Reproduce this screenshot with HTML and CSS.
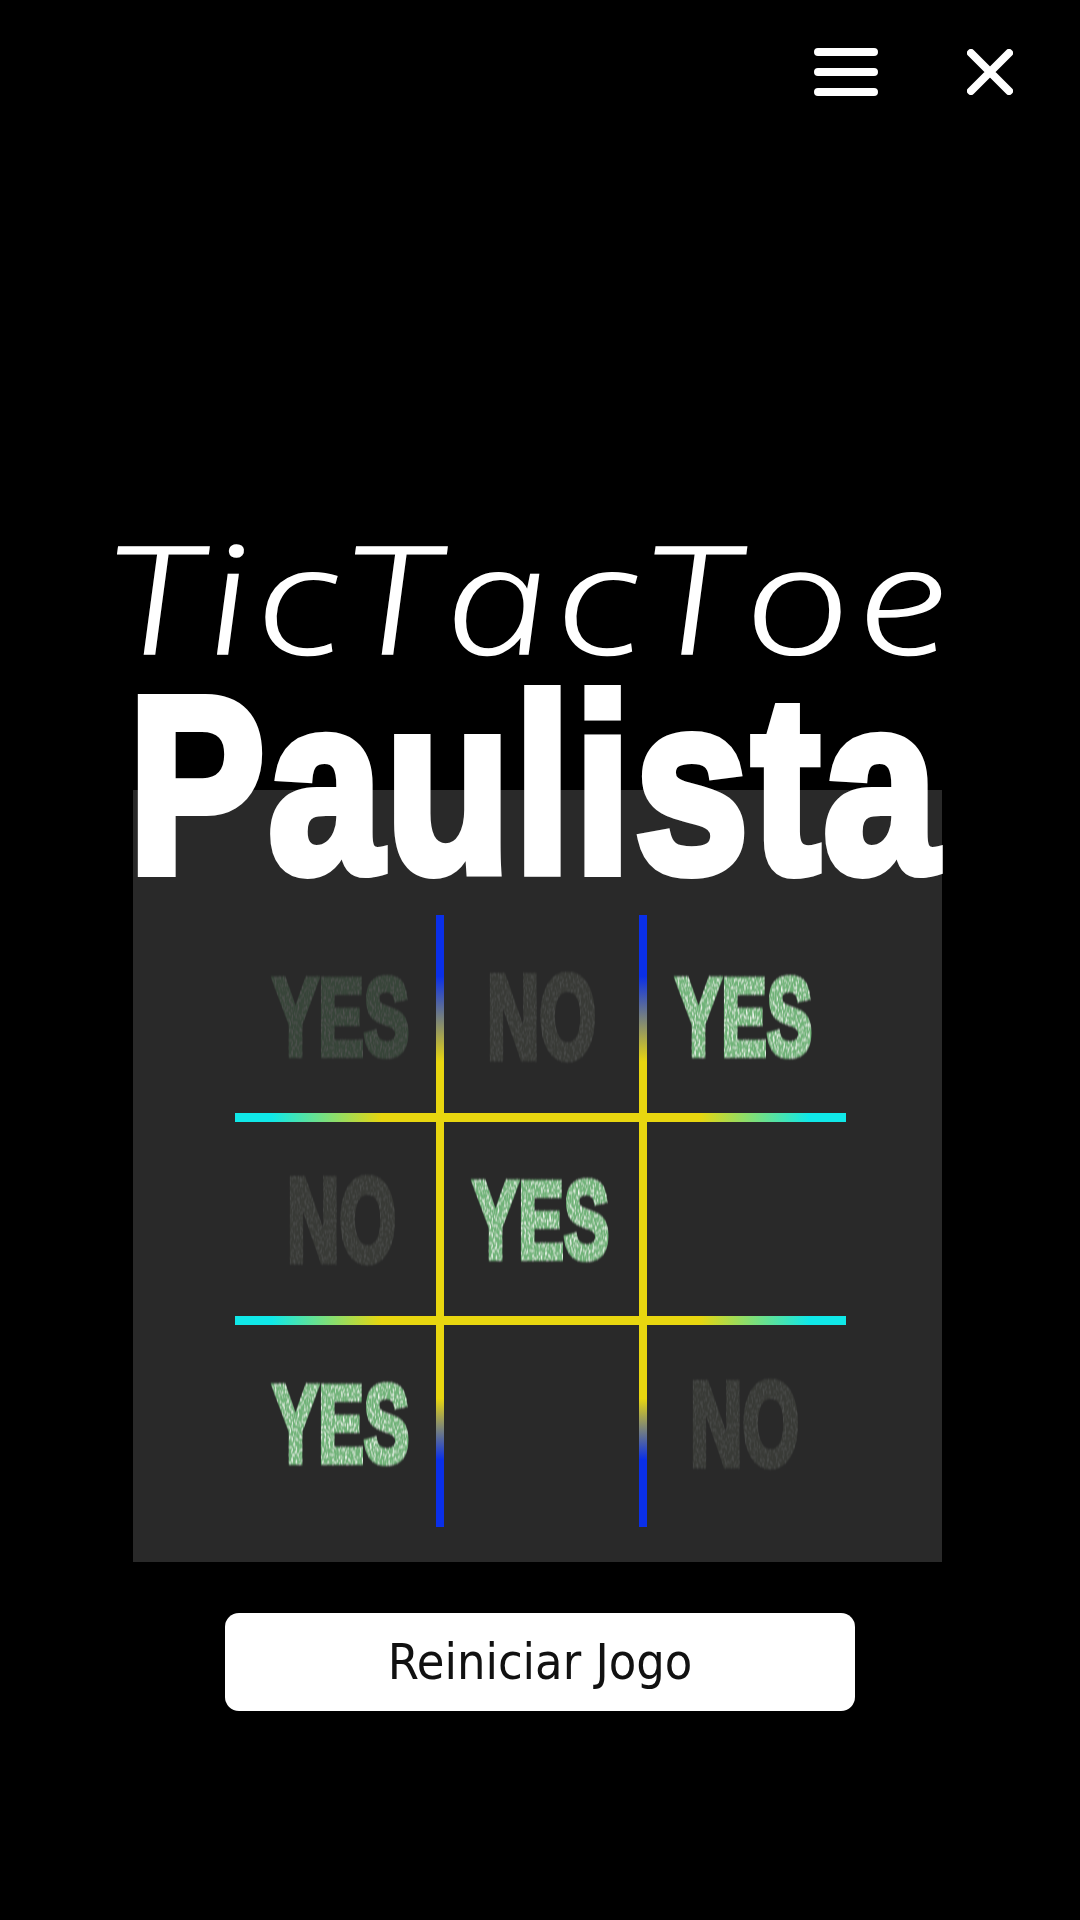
FILE: index.html
```html
<!DOCTYPE html>
<html lang="pt-BR">
<head>
    <meta charset="UTF-8">
    <meta name="viewport" content="width=device-width, initial-scale=1.0">
    <title>TicTacToe Paulista</title>
    <link rel="stylesheet" href="styles.css">
</head>
<body>
<svg class="defs" width="0" height="0" aria-hidden="true">
    <filter id="speckle" x="-5%" y="-5%" width="110%" height="110%">
        <feTurbulence type="fractalNoise" baseFrequency="0.3 0.4" numOctaves="2" seed="7" result="noise"/>
        <feColorMatrix in="noise" type="matrix" values="0 0 0 0 0.86  0 0 0 0 0.94  0 0 0 0 0.86  0 0 0 5 -2.6" result="flecks"/>
        <feComposite in="flecks" in2="SourceAlpha" operator="in" result="clipped"/>
        <feMerge result="merged">
            <feMergeNode in="SourceGraphic"/>
            <feMergeNode in="clipped"/>
        </feMerge>
        <feGaussianBlur in="merged" stdDeviation="0.8"/>
    </filter>
</svg>

<header class="topbar">
    <button class="icon-btn" type="button" aria-label="Menu">
        <svg class="icon-menu" viewBox="0 0 64 48">
            <path d="M4 4H60M4 24H60M4 44H60"/>
        </svg>
    </button>
    <button class="icon-btn" type="button" aria-label="Fechar">
        <svg class="icon-close" viewBox="0 0 46 46">
            <path d="M4 4L42 42M42 4L4 42"/>
        </svg>
    </button>
</header>

<main class="game">
    <h1 class="title">
        <span class="title-script">TicTacToe</span>
        <span class="title-main">Paulista</span>
    </h1>

    <section class="panel">
        <div class="board">
            <span class="word word-yes word-dim cell-r1 cell-c1">YES</span>
            <span class="word word-no word-dim cell-r1 cell-c2">NO</span>
            <span class="word word-yes cell-r1 cell-c3">YES</span>
            <span class="word word-no word-dim cell-r2 cell-c1">NO</span>
            <span class="word word-yes cell-r2 cell-c2">YES</span>
            <span class="word word-yes cell-r3 cell-c1">YES</span>
            <span class="word word-no word-dim cell-r3 cell-c3">NO</span>

            <i class="line-v line-v1"></i>
            <i class="line-v line-v2"></i>
            <i class="line-h line-h1"></i>
            <i class="line-h line-h2"></i>
        </div>
    </section>

    <button class="restart" type="button">Reiniciar Jogo</button>
</main>
</body>
</html>
```

FILE: styles.css
```css
html, body {
    margin: 0;
    height: 1920px;
    background-color: #000;
    overflow: hidden;
}

body {
    font-family: "Liberation Sans", Arial, sans-serif;
}

.defs {
    display: block;
    height: 0;
}

.topbar {
    display: flex;
    justify-content: flex-end;
    align-items: center;
    gap: 89px;
    height: 144px;
    padding-right: 67px;
}

.icon-btn {
    display: flex;
    padding: 0;
    border: none;
    background: none;
}

.icon-menu {
    width: 64px;
    height: 48px;
}

.icon-close {
    width: 46px;
    height: 46px;
}

.icon-btn path {
    fill: none;
    stroke: #fff;
    stroke-width: 8;
    stroke-linecap: round;
}

.title {
    position: relative;
    z-index: 1;
    display: flex;
    flex-direction: column;
    align-items: center;
    height: 346px;
    margin: 375px 0 0;
    font-weight: normal;
    color: #fff;
}

.title-script {
    flex: none;
    height: 170px;
    font: italic 300 150px/154px "Open Sans", "Liberation Sans", sans-serif;
    letter-spacing: 5px;
    transform: translateX(-9px) scaleX(1.25) skewX(6deg);
    -webkit-text-stroke: 1.5px #fff;
    white-space: nowrap;
}

.title-main {
    flex: none;
    height: 176px;
    font: bold 250px/193px "Liberation Sans", Arial, sans-serif;
    letter-spacing: 4px;
    transform: translateX(-6px) scaleX(0.82);
    -webkit-text-stroke: 10px #fff;
    white-space: nowrap;
    filter: blur(0.6px);
}

.panel {
    box-sizing: border-box;
    width: 809px;
    height: 772px;
    margin: -75px 0 0 133px;
    padding: 125px 96px 35px 102px;
    background-color: #292929;
}

.board {
    display: grid;
    grid-template-columns: 205px 203px 203px;
    grid-template-rows: 203px 203px 206px;
}

.word {
    align-self: center;
    justify-self: center;
    font-size: 110px;
    font-weight: bold;
    line-height: 1;
    transform: scaleX(0.62);
    -webkit-text-stroke: 6px currentColor;
    color: #70b378;
    filter: url(#speckle);
}

.word-no {
    color: #858e77;
    transform: scale(0.66, 1.08);
}

.word-dim {
    opacity: 0.2;
}

.word-no.word-dim {
    opacity: 0.17;
}

.cell-r1 { grid-row: 1; }
.cell-r2 { grid-row: 2; }
.cell-r3 { grid-row: 3; }
.cell-c1 { grid-column: 1; margin-left: 8px; }
.cell-c2 { grid-column: 2; }
.cell-c3 { grid-column: 3; }

.line-v {
    grid-row: 1 / -1;
    justify-self: end;
    width: 8px;
    margin-right: -4px;
    background: linear-gradient(to bottom, #0a2fe8 0%, #0a2fe8 10%, #e8d60f 24%, #e8d60f 79%, #0a2fe8 89%, #0a2fe8 100%);
}

.line-v1 { grid-column: 1; }
.line-v2 { grid-column: 2; }

.line-h {
    grid-column: 1 / -1;
    align-self: end;
    height: 9px;
    margin-bottom: -4px;
    background: linear-gradient(to right, #10e8e8 0%, #10e8e8 6%, #e8d60f 24%, #e8d60f 76%, #10e8e8 94%, #10e8e8 100%);
}

.line-h1 { grid-row: 1; }
.line-h2 { grid-row: 2; }

.restart {
    display: block;
    width: 630px;
    height: 98px;
    margin: 51px 0 0 225px;
    padding: 0;
    border: none;
    border-radius: 14px;
    background-color: #fff;
    color: #111;
    font: 50px "DejaVu Sans Condensed", "DejaVu Sans", sans-serif;
}
```
